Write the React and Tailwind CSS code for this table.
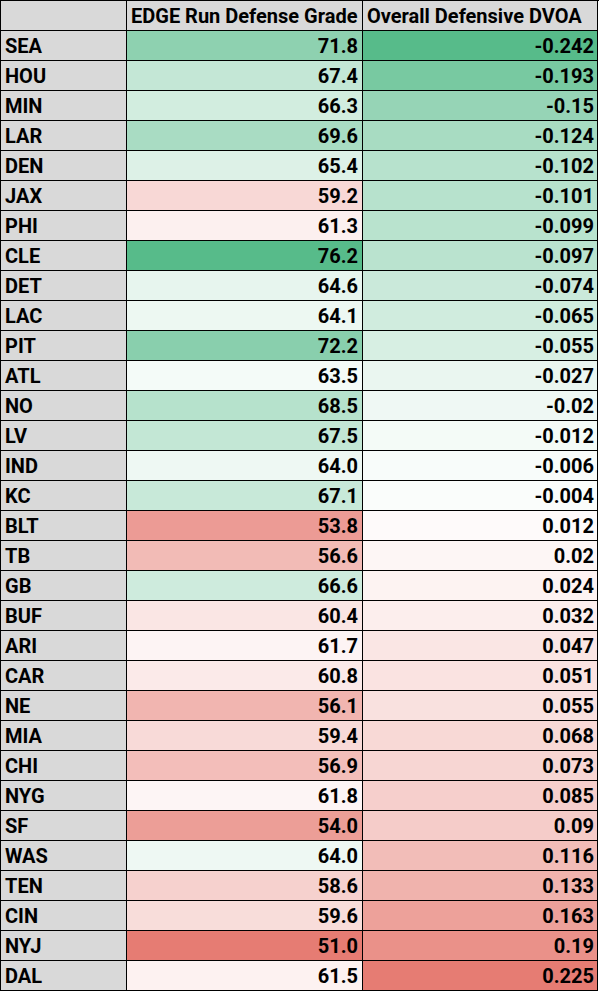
import React from "react";

const rows = [
  ["SEA", "71.8", "-0.242"],
  ["HOU", "67.4", "-0.193"],
  ["MIN", "66.3", "-0.15"],
  ["LAR", "69.6", "-0.124"],
  ["DEN", "65.4", "-0.102"],
  ["JAX", "59.2", "-0.101"],
  ["PHI", "61.3", "-0.099"],
  ["CLE", "76.2", "-0.097"],
  ["DET", "64.6", "-0.074"],
  ["LAC", "64.1", "-0.065"],
  ["PIT", "72.2", "-0.055"],
  ["ATL", "63.5", "-0.027"],
  ["NO", "68.5", "-0.02"],
  ["LV", "67.5", "-0.012"],
  ["IND", "64.0", "-0.006"],
  ["KC", "67.1", "-0.004"],
  ["BLT", "53.8", "0.012"],
  ["TB", "56.6", "0.02"],
  ["GB", "66.6", "0.024"],
  ["BUF", "60.4", "0.032"],
  ["ARI", "61.7", "0.047"],
  ["CAR", "60.8", "0.051"],
  ["NE", "56.1", "0.055"],
  ["MIA", "59.4", "0.068"],
  ["CHI", "56.9", "0.073"],
  ["NYG", "61.8", "0.085"],
  ["SF", "54.0", "0.09"],
  ["WAS", "64.0", "0.116"],
  ["TEN", "58.6", "0.133"],
  ["CIN", "59.6", "0.163"],
  ["NYJ", "51.0", "0.19"],
  ["DAL", "61.5", "0.225"],
];

const RED = [230, 124, 115];
const GREEN = [87, 187, 138];

function scale(values, lowIsGreen) {
  const sorted = [...values].sort((a, b) => a - b);
  const n = sorted.length;
  const mid = (sorted[n / 2 - 1] + sorted[n / 2]) / 2;
  const min = sorted[0];
  const max = sorted[n - 1];
  return values.map((v) => {
    let target, t;
    if (v >= mid) {
      t = (v - mid) / (max - mid);
      target = lowIsGreen ? RED : GREEN;
    } else {
      t = (mid - v) / (mid - min);
      target = lowIsGreen ? GREEN : RED;
    }
    const c = target.map((x) => Math.round(255 + (x - 255) * t));
    return `rgb(${c[0]},${c[1]},${c[2]})`;
  });
}

const col2 = scale(rows.map((r) => parseFloat(r[1])), false);
const col3 = scale(rows.map((r) => parseFloat(r[2])), true);

export default function App() {
  return (
    <div
      className="w-[599px] bg-white text-black font-bold text-[20px] leading-none"
      style={{ fontFamily: "Roboto, 'Liberation Sans', sans-serif" }}
    >
      <div className="grid grid-cols-[126px_236px_235px] border-l border-t border-black">
        <div className="h-[30px] bg-[#d9d9d9] border-r border-b border-black" />
        <div className="h-[30px] bg-[#d9d9d9] border-r border-b border-black flex items-center pl-[4px] whitespace-nowrap">
          EDGE Run Defense Grade
        </div>
        <div className="h-[30px] bg-[#d9d9d9] border-r border-b border-black flex items-center pl-[4px] whitespace-nowrap">
          Overall Defensive DVOA
        </div>
        {rows.map((r, i) => (
          <React.Fragment key={r[0]}>
            <div className="h-[30px] bg-[#d9d9d9] border-r border-b border-black flex items-center pl-[4px]">
              {r[0]}
            </div>
            <div
              className="h-[30px] border-r border-b border-black flex items-center justify-end pr-[4px]"
              style={{ backgroundColor: col2[i] }}
            >
              {r[1]}
            </div>
            <div
              className="h-[30px] border-r border-b border-black flex items-center justify-end pr-[3px]"
              style={{ backgroundColor: col3[i] }}
            >
              {r[2]}
            </div>
          </React.Fragment>
        ))}
      </div>
    </div>
  );
}
